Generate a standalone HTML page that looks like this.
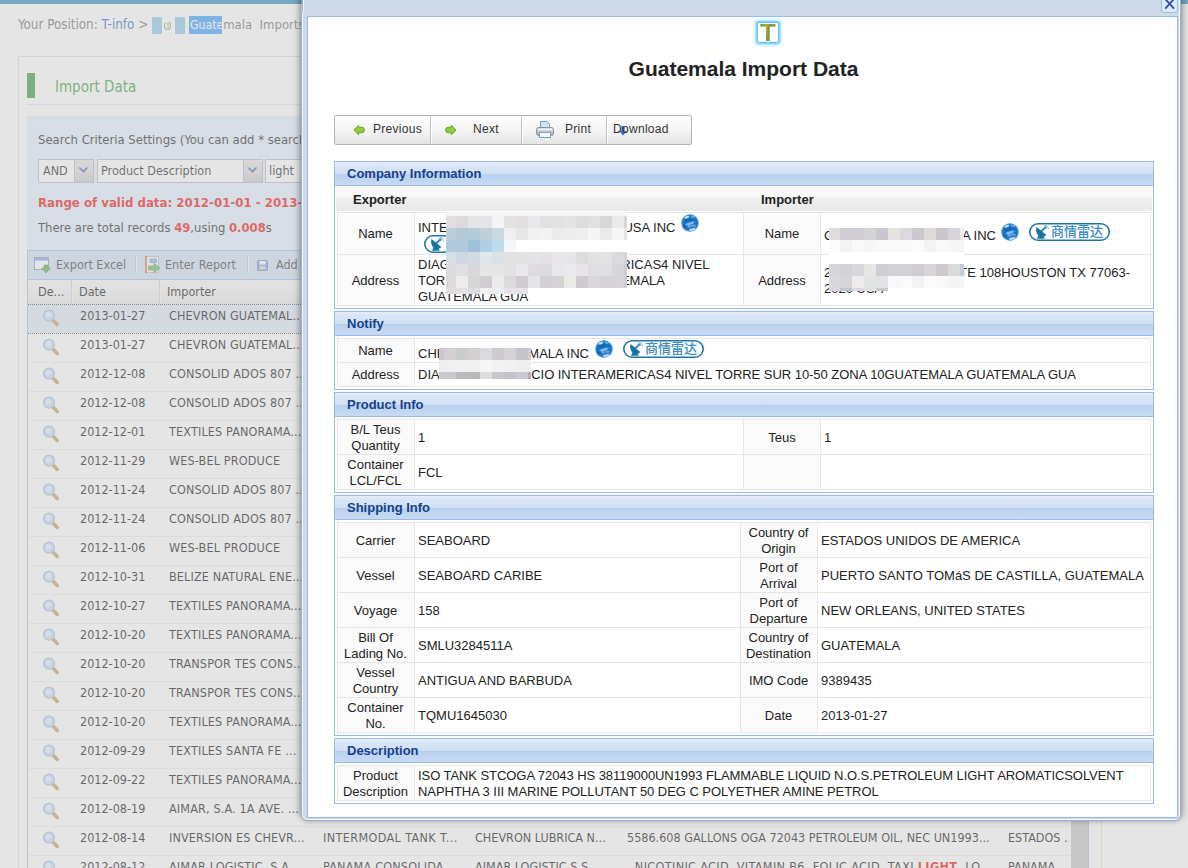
<!DOCTYPE html>
<html><head><meta charset="utf-8"><title>Guatemala Import Data</title>
<style>
html,body{margin:0;padding:0}
body{width:1188px;height:868px;overflow:hidden;position:relative;background:#fff;font-family:"Liberation Sans","Noto Sans CJK SC",sans-serif;font-size:13px;color:#222}
#bg{position:absolute;left:0;top:0;width:1188px;height:868px;overflow:hidden;font-family:"DejaVu Sans Condensed","DejaVu Sans","Liberation Sans",sans-serif;font-size:12.5px;color:#000}
#bg div,#bg span{position:absolute;white-space:pre}
#mask{position:absolute;left:0;top:0;width:1188px;height:868px;background:#ccc;opacity:.5}
.grow{left:28px;width:1041px;height:28px;border-top:1px solid #fff;border-bottom:0;overflow:hidden}
.grow:after{content:"";position:absolute;left:0;right:0;bottom:0;height:0}
.gline{left:28px;width:1041px;height:1px;background:#ededed}
.grow.sel{background:#dfe8f6;border-top:1px dotted #4a4a4a;height:28px}
.gt{top:3px;line-height:16px;height:16px}
.hl{color:#e00;font-weight:bold}
.mag{display:block}
#win i{position:absolute;display:block}
#win div,#win span{position:absolute}
.pnl{left:334px;width:818px;border:1px solid #99bbe8;background:#fff}
.ph{left:0;top:0;width:818px;height:23px;border-bottom:1px solid #99bbe8;background:linear-gradient(#e6eef9 0,#dbe7f6 12%,#cfdff4 51%,#b8cfee 53%,#c8dbf3 100%)}
.ph span{left:12px;top:4px;line-height:16px;font-weight:bold;font-size:13px;color:#15428b;white-space:pre}
.tb{border:1px solid #e6e6e6;background:#fff}
.lb{background:#fafafa}
.vl{width:1px;background:#e6e6e6}
.hl2{height:1px;background:#e6e6e6}
.lbl{width:120px;text-align:center;line-height:16px;white-space:pre;color:#222}
.val{line-height:16px;white-space:pre;color:#222}
.globe{position:absolute}
.radar{width:81px;height:18px}
.rt{left:22px;top:0.5px;font-size:13px;font-weight:500;line-height:16px;color:#3b8cbf;white-space:pre;font-family:"Liberation Sans","Noto Sans CJK SC",sans-serif}
.btn{top:115px;height:28px;border:1px solid #bbb;background:linear-gradient(#fff,#f4f4f4 50%,#e6e6e6);}
.btn span{top:6px;line-height:16px;font-size:12px;color:#333;white-space:pre}
</style></head><body>
<div id="bg">
<div style="left:0;top:0;width:1188px;height:4px;background:#1a84b2"></div>
<span style="left:18px;top:16px;line-height:18px;font-size:13.3px;color:#666">Your Position: <span style="position:static;color:#2a5db0">T-info</span> &gt;</span>
<div style="left:152px;top:17px;width:33px;height:17px;background:#fff"></div>
<div style="left:152px;top:17px;width:10px;height:17px;background:#86c6e6"></div>
<div style="left:175px;top:17px;width:10px;height:17px;background:#86c6e6"></div>
<div style="left:164px;top:21px;width:5px;height:7px;border:1.5px solid #6aa84f;border-top-color:transparent;border-radius:50%"></div><div style="left:167px;top:22px;width:2px;height:6px;background:#d9c9a0"></div>
<div style="left:189px;top:16px;width:33px;height:18px;background:#3399ff"></div>
<span style="left:190px;top:16px;line-height:18px;font-size:13px;color:#666"><span style="position:static;color:#fff;font-size:12.2px">Guate</span>mala  Imports</span>
<div style="left:18px;top:56px;width:1082px;height:900px;border:1px solid #dcdcdc"></div>
<div style="left:27px;top:73px;width:8px;height:25px;background:#2f972d"></div>
<span style="left:55px;top:77px;line-height:20px;font-size:15px;color:#2f972d">Import Data</span>
<div style="left:27px;top:104px;width:1064px;height:1px;background:#e4e4e4"></div>
<div style="left:27px;top:116px;width:1062px;height:800px;background:#e3eefc"></div>
<span style="left:38px;top:131px;line-height:18px;font-size:12.95px;color:#111">Search Criteria Settings (You can add * search with wildcards)</span>
<div style="left:38px;top:159px;width:54px;height:22px;border:1px solid #b0b4c6;background:#fff"></div>
<div style="left:74px;top:160px;width:18px;height:22px;background:linear-gradient(#e2e2e2,#d9d9d9 50%,#c6c6c6);border-left:1px solid #b0b4c6;border-radius:0 3px 0 0"></div>
<svg style="position:absolute;left:78px;top:167px" width="11" height="7" viewBox="0 0 11 7"><path d="M0.3 0.6 L2.6 0.4 L5.4 3.2 L8.2 0.4 L10.5 0.6 L5.4 6 Z" fill="#3f64ae"/></svg>
<span style="left:43px;top:162px;line-height:18px;color:#111">AND</span>
<div style="left:97px;top:159px;width:164px;height:22px;border:1px solid #b0b4c6;background:#fff"></div>
<div style="left:243px;top:160px;width:18px;height:22px;background:linear-gradient(#e2e2e2,#d9d9d9 50%,#c6c6c6);border-left:1px solid #b0b4c6;border-radius:0 3px 0 0"></div>
<svg style="position:absolute;left:247px;top:167px" width="11" height="7" viewBox="0 0 11 7"><path d="M0.3 0.6 L2.6 0.4 L5.4 3.2 L8.2 0.4 L10.5 0.6 L5.4 6 Z" fill="#3f64ae"/></svg>
<span style="left:101px;top:162px;line-height:18px;color:#111">Product Description</span>
<div style="left:265px;top:159px;width:160px;height:22px;border:1px solid #b0b4c6;background:#fff"></div>
<span style="left:269px;top:162px;line-height:18px;color:#111">light</span>
<span style="left:38px;top:194px;line-height:18px;font-size:13.1px;color:#e00;font-weight:bold">Range of valid data<span style="position:static">:</span> 2012-01-01 - 2013-01-31</span>
<span style="left:38px;top:219px;line-height:18px;font-size:12.9px;color:#111">There are total records <b style="color:#e00">49</b>,using <b style="color:#e00">0.008</b>s</span>
<div style="left:27px;top:250px;width:1060px;height:700px;border:1px solid #99bbe8;background:#fff"></div>
<div style="left:28px;top:251px;width:1060px;height:28px;background:#d0def0;border-bottom:1px solid #99bbe8"></div>
<svg style="position:absolute;left:34px;top:257px" width="17" height="17" viewBox="0 0 17 17"><rect x="0.5" y="0.5" width="14" height="12" fill="#fff" stroke="#7d96c0"/><rect x="1" y="1" width="13" height="2.6" fill="#7aa0e6"/><path d="M10 8h4v3h2.5l-4.5 5-4.5-5H10z" fill="#4cae3c" stroke="#2f8a25" stroke-width=".6"/></svg>
<span style="left:56px;top:256px;line-height:18px;color:#333">Export Excel</span>
<div style="left:135px;top:257px;width:1px;height:16px;background:#98c8ff"></div><div style="left:136px;top:257px;width:1px;height:16px;background:#fff"></div>
<svg style="position:absolute;left:144px;top:256px" width="17" height="18" viewBox="0 0 17 18"><rect x="2.5" y="0.5" width="12" height="16" fill="#f6f6f6" stroke="#b8bcc6"/><rect x="1" y="0" width="2" height="17" fill="#c86a3c"/><path d="M1 2h2M1 4h2M1 6h2M1 8h2M1 10h2M1 12h2M1 14h2" stroke="#f0c0a0" stroke-width=".6"/><rect x="6" y="3" width="6.5" height="3.6" fill="#86aef0" stroke="#5b86d6" stroke-width=".6"/><path d="M4.6 10h5.4V7.2l6 4.8-6 4.8V14H4.6z" fill="#62bc50" stroke="#2f8a25" stroke-width=".6"/></svg>
<span style="left:165px;top:256px;line-height:18px;color:#333">Enter Report</span>
<div style="left:247px;top:257px;width:1px;height:16px;background:#98c8ff"></div><div style="left:248px;top:257px;width:1px;height:16px;background:#fff"></div>
<svg style="position:absolute;left:257px;top:260px" width="12" height="11" viewBox="0 0 12 11"><rect x="0.5" y="0.5" width="10" height="10" rx="1" fill="#7d9be0" stroke="#5f7fd0"/><rect x="2.5" y="1" width="6" height="3.5" fill="#fff"/><rect x="2.5" y="6.3" width="6" height="3.2" fill="#cfe6a0"/></svg>
<span style="left:276px;top:256px;line-height:18px;color:#333">Add</span>
<div style="left:28px;top:280px;width:1060px;height:24px;background:linear-gradient(#f9f9f9,#f3f3f3 50%,#e4e4e4);"></div>
<div style="left:71px;top:280px;width:1px;height:23px;background:#d0d0d0"></div><div style="left:72px;top:280px;width:1px;height:23px;background:#fafafa"></div>
<div style="left:159px;top:280px;width:1px;height:23px;background:#d0d0d0"></div><div style="left:160px;top:280px;width:1px;height:23px;background:#fafafa"></div>
<span style="left:38px;top:283px;line-height:18px">De...</span>
<span style="left:79px;top:283px;line-height:18px">Date</span>
<span style="left:167px;top:283px;line-height:18px">Importer</span>
<div class="grow sel" style="top:304px"><div class="gc" style="left:14px;top:4px"><svg class="mag" width="18" height="18" viewBox="0 0 18 18"><line x1="10.4" y1="10.4" x2="15.2" y2="15.4" stroke="#c9975a" stroke-width="3.6" stroke-linecap="round"/><circle cx="7" cy="6.6" r="5.4" fill="#c6dcf5" stroke="#9fbfe8" stroke-width="1.5"/><circle cx="6.4" cy="5.8" r="2.6" fill="#e6f1fc"/></svg></div><span class="gt" style="left:52px">2013-01-27</span><span class="gt" style="left:141px;letter-spacing:.15px">CHEVRON GUATEMAL...</span></div>
<div class="grow" style="top:333px"><div class="gc" style="left:14px;top:4px"><svg class="mag" width="18" height="18" viewBox="0 0 18 18"><line x1="10.4" y1="10.4" x2="15.2" y2="15.4" stroke="#c9975a" stroke-width="3.6" stroke-linecap="round"/><circle cx="7" cy="6.6" r="5.4" fill="#c6dcf5" stroke="#9fbfe8" stroke-width="1.5"/><circle cx="6.4" cy="5.8" r="2.6" fill="#e6f1fc"/></svg></div><span class="gt" style="left:52px">2013-01-27</span><span class="gt" style="left:141px;letter-spacing:.15px">CHEVRON GUATEMAL...</span></div>
<div class="grow" style="top:362px"><div class="gc" style="left:14px;top:4px"><svg class="mag" width="18" height="18" viewBox="0 0 18 18"><line x1="10.4" y1="10.4" x2="15.2" y2="15.4" stroke="#c9975a" stroke-width="3.6" stroke-linecap="round"/><circle cx="7" cy="6.6" r="5.4" fill="#c6dcf5" stroke="#9fbfe8" stroke-width="1.5"/><circle cx="6.4" cy="5.8" r="2.6" fill="#e6f1fc"/></svg></div><span class="gt" style="left:52px">2012-12-08</span><span class="gt" style="left:141px;letter-spacing:.15px">CONSOLID ADOS 807 ...</span></div>
<div class="grow" style="top:391px"><div class="gc" style="left:14px;top:4px"><svg class="mag" width="18" height="18" viewBox="0 0 18 18"><line x1="10.4" y1="10.4" x2="15.2" y2="15.4" stroke="#c9975a" stroke-width="3.6" stroke-linecap="round"/><circle cx="7" cy="6.6" r="5.4" fill="#c6dcf5" stroke="#9fbfe8" stroke-width="1.5"/><circle cx="6.4" cy="5.8" r="2.6" fill="#e6f1fc"/></svg></div><span class="gt" style="left:52px">2012-12-08</span><span class="gt" style="left:141px;letter-spacing:.15px">CONSOLID ADOS 807 ...</span></div>
<div class="grow" style="top:420px"><div class="gc" style="left:14px;top:4px"><svg class="mag" width="18" height="18" viewBox="0 0 18 18"><line x1="10.4" y1="10.4" x2="15.2" y2="15.4" stroke="#c9975a" stroke-width="3.6" stroke-linecap="round"/><circle cx="7" cy="6.6" r="5.4" fill="#c6dcf5" stroke="#9fbfe8" stroke-width="1.5"/><circle cx="6.4" cy="5.8" r="2.6" fill="#e6f1fc"/></svg></div><span class="gt" style="left:52px">2012-12-01</span><span class="gt" style="left:141px;letter-spacing:.15px">TEXTILES PANORAMA...</span></div>
<div class="grow" style="top:449px"><div class="gc" style="left:14px;top:4px"><svg class="mag" width="18" height="18" viewBox="0 0 18 18"><line x1="10.4" y1="10.4" x2="15.2" y2="15.4" stroke="#c9975a" stroke-width="3.6" stroke-linecap="round"/><circle cx="7" cy="6.6" r="5.4" fill="#c6dcf5" stroke="#9fbfe8" stroke-width="1.5"/><circle cx="6.4" cy="5.8" r="2.6" fill="#e6f1fc"/></svg></div><span class="gt" style="left:52px">2012-11-29</span><span class="gt" style="left:141px;letter-spacing:.15px">WES-BEL PRODUCE</span></div>
<div class="grow" style="top:478px"><div class="gc" style="left:14px;top:4px"><svg class="mag" width="18" height="18" viewBox="0 0 18 18"><line x1="10.4" y1="10.4" x2="15.2" y2="15.4" stroke="#c9975a" stroke-width="3.6" stroke-linecap="round"/><circle cx="7" cy="6.6" r="5.4" fill="#c6dcf5" stroke="#9fbfe8" stroke-width="1.5"/><circle cx="6.4" cy="5.8" r="2.6" fill="#e6f1fc"/></svg></div><span class="gt" style="left:52px">2012-11-24</span><span class="gt" style="left:141px;letter-spacing:.15px">CONSOLID ADOS 807 ...</span></div>
<div class="grow" style="top:507px"><div class="gc" style="left:14px;top:4px"><svg class="mag" width="18" height="18" viewBox="0 0 18 18"><line x1="10.4" y1="10.4" x2="15.2" y2="15.4" stroke="#c9975a" stroke-width="3.6" stroke-linecap="round"/><circle cx="7" cy="6.6" r="5.4" fill="#c6dcf5" stroke="#9fbfe8" stroke-width="1.5"/><circle cx="6.4" cy="5.8" r="2.6" fill="#e6f1fc"/></svg></div><span class="gt" style="left:52px">2012-11-24</span><span class="gt" style="left:141px;letter-spacing:.15px">CONSOLID ADOS 807 ...</span></div>
<div class="grow" style="top:536px"><div class="gc" style="left:14px;top:4px"><svg class="mag" width="18" height="18" viewBox="0 0 18 18"><line x1="10.4" y1="10.4" x2="15.2" y2="15.4" stroke="#c9975a" stroke-width="3.6" stroke-linecap="round"/><circle cx="7" cy="6.6" r="5.4" fill="#c6dcf5" stroke="#9fbfe8" stroke-width="1.5"/><circle cx="6.4" cy="5.8" r="2.6" fill="#e6f1fc"/></svg></div><span class="gt" style="left:52px">2012-11-06</span><span class="gt" style="left:141px;letter-spacing:.15px">WES-BEL PRODUCE</span></div>
<div class="grow" style="top:565px"><div class="gc" style="left:14px;top:4px"><svg class="mag" width="18" height="18" viewBox="0 0 18 18"><line x1="10.4" y1="10.4" x2="15.2" y2="15.4" stroke="#c9975a" stroke-width="3.6" stroke-linecap="round"/><circle cx="7" cy="6.6" r="5.4" fill="#c6dcf5" stroke="#9fbfe8" stroke-width="1.5"/><circle cx="6.4" cy="5.8" r="2.6" fill="#e6f1fc"/></svg></div><span class="gt" style="left:52px">2012-10-31</span><span class="gt" style="left:141px;letter-spacing:.15px">BELIZE NATURAL ENE...</span></div>
<div class="grow" style="top:594px"><div class="gc" style="left:14px;top:4px"><svg class="mag" width="18" height="18" viewBox="0 0 18 18"><line x1="10.4" y1="10.4" x2="15.2" y2="15.4" stroke="#c9975a" stroke-width="3.6" stroke-linecap="round"/><circle cx="7" cy="6.6" r="5.4" fill="#c6dcf5" stroke="#9fbfe8" stroke-width="1.5"/><circle cx="6.4" cy="5.8" r="2.6" fill="#e6f1fc"/></svg></div><span class="gt" style="left:52px">2012-10-27</span><span class="gt" style="left:141px;letter-spacing:.15px">TEXTILES PANORAMA...</span></div>
<div class="grow" style="top:623px"><div class="gc" style="left:14px;top:4px"><svg class="mag" width="18" height="18" viewBox="0 0 18 18"><line x1="10.4" y1="10.4" x2="15.2" y2="15.4" stroke="#c9975a" stroke-width="3.6" stroke-linecap="round"/><circle cx="7" cy="6.6" r="5.4" fill="#c6dcf5" stroke="#9fbfe8" stroke-width="1.5"/><circle cx="6.4" cy="5.8" r="2.6" fill="#e6f1fc"/></svg></div><span class="gt" style="left:52px">2012-10-20</span><span class="gt" style="left:141px;letter-spacing:.15px">TEXTILES PANORAMA...</span></div>
<div class="grow" style="top:652px"><div class="gc" style="left:14px;top:4px"><svg class="mag" width="18" height="18" viewBox="0 0 18 18"><line x1="10.4" y1="10.4" x2="15.2" y2="15.4" stroke="#c9975a" stroke-width="3.6" stroke-linecap="round"/><circle cx="7" cy="6.6" r="5.4" fill="#c6dcf5" stroke="#9fbfe8" stroke-width="1.5"/><circle cx="6.4" cy="5.8" r="2.6" fill="#e6f1fc"/></svg></div><span class="gt" style="left:52px">2012-10-20</span><span class="gt" style="left:141px;letter-spacing:.15px">TRANSPOR TES CONS...</span></div>
<div class="grow" style="top:681px"><div class="gc" style="left:14px;top:4px"><svg class="mag" width="18" height="18" viewBox="0 0 18 18"><line x1="10.4" y1="10.4" x2="15.2" y2="15.4" stroke="#c9975a" stroke-width="3.6" stroke-linecap="round"/><circle cx="7" cy="6.6" r="5.4" fill="#c6dcf5" stroke="#9fbfe8" stroke-width="1.5"/><circle cx="6.4" cy="5.8" r="2.6" fill="#e6f1fc"/></svg></div><span class="gt" style="left:52px">2012-10-20</span><span class="gt" style="left:141px;letter-spacing:.15px">TRANSPOR TES CONS...</span></div>
<div class="grow" style="top:710px"><div class="gc" style="left:14px;top:4px"><svg class="mag" width="18" height="18" viewBox="0 0 18 18"><line x1="10.4" y1="10.4" x2="15.2" y2="15.4" stroke="#c9975a" stroke-width="3.6" stroke-linecap="round"/><circle cx="7" cy="6.6" r="5.4" fill="#c6dcf5" stroke="#9fbfe8" stroke-width="1.5"/><circle cx="6.4" cy="5.8" r="2.6" fill="#e6f1fc"/></svg></div><span class="gt" style="left:52px">2012-10-20</span><span class="gt" style="left:141px;letter-spacing:.15px">TEXTILES PANORAMA...</span></div>
<div class="grow" style="top:739px"><div class="gc" style="left:14px;top:4px"><svg class="mag" width="18" height="18" viewBox="0 0 18 18"><line x1="10.4" y1="10.4" x2="15.2" y2="15.4" stroke="#c9975a" stroke-width="3.6" stroke-linecap="round"/><circle cx="7" cy="6.6" r="5.4" fill="#c6dcf5" stroke="#9fbfe8" stroke-width="1.5"/><circle cx="6.4" cy="5.8" r="2.6" fill="#e6f1fc"/></svg></div><span class="gt" style="left:52px">2012-09-29</span><span class="gt" style="left:141px;letter-spacing:.15px">TEXTILES SANTA FE ...</span></div>
<div class="grow" style="top:768px"><div class="gc" style="left:14px;top:4px"><svg class="mag" width="18" height="18" viewBox="0 0 18 18"><line x1="10.4" y1="10.4" x2="15.2" y2="15.4" stroke="#c9975a" stroke-width="3.6" stroke-linecap="round"/><circle cx="7" cy="6.6" r="5.4" fill="#c6dcf5" stroke="#9fbfe8" stroke-width="1.5"/><circle cx="6.4" cy="5.8" r="2.6" fill="#e6f1fc"/></svg></div><span class="gt" style="left:52px">2012-09-22</span><span class="gt" style="left:141px;letter-spacing:.15px">TEXTILES PANORAMA...</span></div>
<div class="grow" style="top:797px"><div class="gc" style="left:14px;top:4px"><svg class="mag" width="18" height="18" viewBox="0 0 18 18"><line x1="10.4" y1="10.4" x2="15.2" y2="15.4" stroke="#c9975a" stroke-width="3.6" stroke-linecap="round"/><circle cx="7" cy="6.6" r="5.4" fill="#c6dcf5" stroke="#9fbfe8" stroke-width="1.5"/><circle cx="6.4" cy="5.8" r="2.6" fill="#e6f1fc"/></svg></div><span class="gt" style="left:52px">2012-08-19</span><span class="gt" style="left:141px;letter-spacing:.15px">AIMAR, S.A. 1A AVE. ...</span></div>
<div class="grow" style="top:826px"><div class="gc" style="left:14px;top:4px"><svg class="mag" width="18" height="18" viewBox="0 0 18 18"><line x1="10.4" y1="10.4" x2="15.2" y2="15.4" stroke="#c9975a" stroke-width="3.6" stroke-linecap="round"/><circle cx="7" cy="6.6" r="5.4" fill="#c6dcf5" stroke="#9fbfe8" stroke-width="1.5"/><circle cx="6.4" cy="5.8" r="2.6" fill="#e6f1fc"/></svg></div><span class="gt" style="left:52px">2012-08-14</span><span class="gt" style="left:141px;letter-spacing:.15px">INVERSION ES CHEVR...</span><span class="gt" style="left:295px;letter-spacing:0.38px">INTERMODAL TANK T...</span><span class="gt" style="left:447px">CHEVRON LUBRICA N...</span><span class="gt" style="left:599px">5586.608 GALLONS OGA 72043 PETROLEUM OIL, NEC UN1993...</span><span class="gt" style="left:980px">ESTADOS ...</span></div>
<div class="grow" style="top:855px"><div class="gc" style="left:14px;top:4px"><svg class="mag" width="18" height="18" viewBox="0 0 18 18"><line x1="10.4" y1="10.4" x2="15.2" y2="15.4" stroke="#c9975a" stroke-width="3.6" stroke-linecap="round"/><circle cx="7" cy="6.6" r="5.4" fill="#c6dcf5" stroke="#9fbfe8" stroke-width="1.5"/><circle cx="6.4" cy="5.8" r="2.6" fill="#e6f1fc"/></svg></div><span class="gt" style="left:52px">2012-08-12</span><span class="gt" style="left:141px;letter-spacing:.15px">AIMAR LOGISTIC, S.A...</span><span class="gt" style="left:295px;letter-spacing:0.2px">PANAMA CONSOLIDA...</span><span class="gt" style="left:447px">AIMAR LOGISTIC S.S...</span><span class="gt" style="left:599px;letter-spacing:0.36px">&nbsp; NICOTINIC ACID, VITAMIN B6, FOLIC ACID, TAXI <b class="hl">LIGHT</b>, LO...</span><span class="gt" style="left:980px">PANAMA ...</span></div>
<div class="gline" style="top:362px"></div><div class="gline" style="top:391px"></div><div class="gline" style="top:420px"></div><div class="gline" style="top:449px"></div><div class="gline" style="top:478px"></div><div class="gline" style="top:507px"></div><div class="gline" style="top:536px"></div><div class="gline" style="top:565px"></div><div class="gline" style="top:594px"></div><div class="gline" style="top:623px"></div><div class="gline" style="top:652px"></div><div class="gline" style="top:681px"></div><div class="gline" style="top:710px"></div><div class="gline" style="top:739px"></div><div class="gline" style="top:768px"></div><div class="gline" style="top:797px"></div><div class="gline" style="top:826px"></div><div class="gline" style="top:855px"></div>
<div class="gline" style="top:333px;background:none;border-top:1px dotted #4a4a4a;height:0"></div>
<div style="left:1071px;top:280px;width:17px;height:600px;background:#c3c3c3"></div>
</div>
<div id="mask"></div>
<div id="win">
<div style="left:301px;top:-20px;width:878px;height:839px;border:1px solid #9fb2cb;border-radius:6px;background:#ced9e7;box-shadow:-4px -2px 6px -2px rgba(0,0,0,.3),4px -2px 6px -2px rgba(0,0,0,.3),0 2px 4px 0 rgba(0,0,0,.12), inset 0 0 0 1px #f2f6fb"></div>
<div style="left:307px;top:16px;width:869px;height:800px;border:1px solid #99bbe8;background:#fff"></div>
<div style="left:301px;top:0;width:1px;height:12px;background:#c9c9c9"></div><div style="left:302px;top:0;width:1px;height:12px;background:#9fb2cb"></div><div style="left:303px;top:0;width:1px;height:12px;background:#f2f6fb"></div><div style="left:301px;top:0;width:1px;height:4px;background:#6f9fb6"></div>
<div style="left:1161px;top:-6px;width:15px;height:17px;border:1px solid #9bbbe6;border-radius:3px;background:#dbe9fb"></div>
<svg style="position:absolute;left:1163px;top:0" width="14" height="11" viewBox="0 0 14 11"><path d="M2.2 -1 L11 8.6 M11 -1 L2.2 8.6" stroke="#3c519c" stroke-width="1.9"/></svg>
<div style="left:758px;top:23px;width:20px;height:19px;background:#fff;box-shadow:0 0 0 1.5px #62c6f7,0 0 3px 3px rgba(92,196,247,.6);border-radius:1px"></div>
<span style="left:756px;top:20px;width:24px;height:26px;text-align:center;line-height:26px;font-size:23.5px;font-weight:bold;transform:scaleX(1.1);font-family:'Liberation Sans',sans-serif;color:#8a9a4c;background:linear-gradient(100deg,#8a5fb0 0,#6fae3a 22%,#b9a733 42%,#7d8f55 52%,#8aa83c 62%,#a9725a 80%,#5fae4a 100%);-webkit-background-clip:text;background-clip:text;-webkit-text-fill-color:transparent">T</span>
<span style="left:443px;top:55px;width:601px;text-align:center;font-size:21px;font-weight:bold;line-height:28px;color:#222;white-space:pre">Guatemala Import Data</span>
<div style="left:334px;top:115px;width:356px;height:28px;border:1px solid #b4b4b4;border-radius:2px;background:linear-gradient(#fefefe,#f3f3f3 55%,#e4e4e4)"></div>
<div style="left:430px;top:116px;width:1px;height:28px;background:#c2c2c2"></div><div style="left:431px;top:116px;width:1px;height:28px;background:rgba(255,255,255,.8)"></div>
<div style="left:521px;top:116px;width:1px;height:28px;background:#c2c2c2"></div><div style="left:522px;top:116px;width:1px;height:28px;background:rgba(255,255,255,.8)"></div>
<div style="left:606px;top:116px;width:1px;height:28px;background:#c2c2c2"></div><div style="left:607px;top:116px;width:1px;height:28px;background:rgba(255,255,255,.8)"></div>
<svg style="position:absolute;left:353px;top:124px" width="12" height="12" viewBox="0 0 12 12"><path d="M5.6 1.2 L5.6 3.3 L9 3.3 A2.3 2.6 0 0 1 9 8.7 L5.6 8.7 L5.6 10.8 L0.9 6 Z" fill="#8fca3c" stroke="#6aa61f" stroke-width="1" stroke-linejoin="round"/></svg>
<span style="left:373px;top:121px;font-size:12px;letter-spacing:.3px;line-height:16px;color:#333;white-space:pre">Previous</span>
<svg style="position:absolute;left:444.5px;top:124px" width="12" height="12" viewBox="0 0 12 12"><path d="M6.4 1.2 L6.4 3.3 L3 3.3 A2.3 2.6 0 0 0 3 8.7 L6.4 8.7 L6.4 10.8 L11.1 6 Z" fill="#8fca3c" stroke="#6aa61f" stroke-width="1" stroke-linejoin="round"/></svg>
<span style="left:473px;top:121px;font-size:12px;letter-spacing:.3px;line-height:16px;color:#333;white-space:pre">Next</span>
<svg style="position:absolute;left:536px;top:121px" width="18" height="17" viewBox="0 0 18 17"><defs><linearGradient id="pg" x1="0" y1="0" x2="0" y2="1"><stop offset="0" stop-color="#e9e9e9"/><stop offset="1" stop-color="#a9a9a9"/></linearGradient></defs><path d="M4.5 0.5h6.5l2.5 2.5v5h-9z" fill="#cfe4fb" stroke="#6aa3e4"/><rect x="0.5" y="6.5" width="17" height="8" rx="2.2" fill="url(#pg)" stroke="#909090"/><rect x="2" y="8" width="14" height="1.2" fill="#f6f6f6" opacity=".8"/><rect x="3.5" y="11.5" width="11" height="5" fill="#fff" stroke="#6aa3e4"/></svg>
<span style="left:565px;top:121px;font-size:12px;letter-spacing:.3px;line-height:16px;color:#333;white-space:pre">Print</span>
<svg style="position:absolute;left:619px;top:126px" width="8" height="10" viewBox="0 0 8 10"><path d="M2.4 0h3.2v5h2.2L4 9.6 0.2 5h2.2z" fill="#3a6fd8"/></svg>
<span style="left:613px;top:121px;font-size:12px;letter-spacing:.3px;line-height:16px;color:#333;white-space:pre">Download</span>

<div class="pnl" style="top:161px;height:146px"><div class="ph"><span>Company Information</span></div></div><div style="left:336px;top:186px;width:816px;height:25px;background:linear-gradient(#fbfbfb 0,#f7f7f7 42%,#f0f0f0 45%,#e8e8e8 100%)"></div><span style="left:353px;top:192px;line-height:16px;font-weight:bold;color:#222;white-space:pre">Exporter</span><span style="left:761px;top:192px;line-height:16px;font-weight:bold;color:#222;white-space:pre">Importer</span><div class="tb" style="left:337px;top:212px;width:812px;height:92px"></div><div class="lb" style="left:338px;top:213px;width:76px;height:92px"></div><div class="lb" style="left:744px;top:213px;width:76px;height:92px"></div><div class="vl" style="left:414px;top:212px;height:94px"></div><div class="vl" style="left:743px;top:212px;height:94px"></div><div class="vl" style="left:820px;top:212px;height:94px"></div><div class="hl2" style="left:337px;top:254px;width:814px"></div><span class="lbl" style="left:315.5px;top:226px">Name</span><span class="lbl" style="left:315.5px;top:273px">Address</span><span class="lbl" style="left:722px;top:226px">Name</span><span class="lbl" style="left:722px;top:273px">Address</span><span class="val" style="left:418px;top:220px;">INTE</span><span class="val" style="right:512.5px;top:220px;">USA INC</span><span style="left:681px;top:214px;width:18px;height:18px"><svg class="globe" width="18" height="18" viewBox="0 0 18 18"><defs><radialGradient id="gg" cx="50%" cy="50%" r="50%"><stop offset="0" stop-color="#1672c4"/><stop offset="0.75" stop-color="#1a74c6"/><stop offset="0.93" stop-color="#4a98dc"/><stop offset="1" stop-color="#8fc3ee" stop-opacity=".7"/></radialGradient><filter id="gb" x="-20%" y="-20%" width="140%" height="140%"><feGaussianBlur stdDeviation="0.7"/></filter><clipPath id="gc"><circle cx="9" cy="9" r="8.8"/></clipPath></defs><circle cx="9" cy="9" r="9" fill="url(#gg)"/><g clip-path="url(#gc)" filter="url(#gb)"><ellipse cx="5.8" cy="3.2" rx="2.4" ry="1.1" fill="#fff" opacity=".8" transform="rotate(-18 5.8 3.2)"/><ellipse cx="12" cy="2.8" rx="2.6" ry="1" fill="#9fcdf0" opacity=".6"/><ellipse cx="9.5" cy="9.4" rx="6.5" ry="1.3" fill="#b8d8f4" opacity=".7" transform="rotate(-16 9.5 9.4)"/><ellipse cx="8.2" cy="12.2" rx="1.8" ry="1.5" fill="#a8c8f0" opacity=".6"/><ellipse cx="12.5" cy="11.8" rx="2.4" ry="1.2" fill="#a8c8f0" opacity=".55"/><ellipse cx="11.2" cy="15.4" rx="3.4" ry="1.3" fill="#e8f3fc" opacity=".75" transform="rotate(-12 11.2 15.4)"/><ellipse cx="5.4" cy="6.6" rx="1.6" ry="1.2" fill="#0a5fb4" opacity=".7"/><ellipse cx="9" cy="5.8" rx="1.7" ry="1.3" fill="#0a5fb4" opacity=".7"/><ellipse cx="3.8" cy="12" rx="2" ry="2.6" fill="#0a60b6" opacity=".6"/><ellipse cx="14.2" cy="8" rx="2" ry="2.2" fill="#0a60b6" opacity=".55"/></g></svg></span><span class="radar" style="left:424px;top:235px"><svg width="81" height="18" viewBox="0 0 81 18" style="position:absolute;left:0;top:0"><rect x="0.8" y="0.8" width="79.4" height="16.4" rx="8.2" fill="#fff" stroke="#1f77a6" stroke-width="1.6"/><g transform="translate(6.2,1.9) scale(0.9)"><path d="M1.6 2.2 L12.4 11.2 C10 14.2 5 13.8 2.6 10.6 C0.8 8.2 0.6 4.6 1.6 2.2 Z" fill="#1876a4"/><path d="M3.6 11.4 L2 15.4 L10.6 15.4 L9 12.4 Z" fill="#1876a4"/><path d="M6 7.8 L10.6 3.6" stroke="#1876a4" stroke-width="1.8"/><circle cx="11.2" cy="3.1" r="1.6" fill="#4f97be"/><path d="M10 0.5 C13.2 0.1 15.1 2.3 14.5 5.3" fill="none" stroke="#9cc6dc" stroke-width="1.2"/></g></svg><span class="rt">商情雷达</span></span><span class="val" style="left:418px;top:257px;">DIAG</span><span class="val" style="right:478.5px;top:257px;">RICAS4 NIVEL</span><span class="val" style="left:418px;top:273px;">TORRE</span><span class="val" style="right:523px;top:273px;">EMALA</span><span class="val" style="left:418px;top:289px;">GUATEMALA GUA</span><span class="val" style="left:824px;top:228px;">C</span><span class="val" style="right:192px;top:228px;">A INC</span><span style="left:1001px;top:223px;width:18px;height:18px"><svg class="globe" width="18" height="18" viewBox="0 0 18 18"><defs><radialGradient id="gg" cx="50%" cy="50%" r="50%"><stop offset="0" stop-color="#1672c4"/><stop offset="0.75" stop-color="#1a74c6"/><stop offset="0.93" stop-color="#4a98dc"/><stop offset="1" stop-color="#8fc3ee" stop-opacity=".7"/></radialGradient><filter id="gb" x="-20%" y="-20%" width="140%" height="140%"><feGaussianBlur stdDeviation="0.7"/></filter><clipPath id="gc"><circle cx="9" cy="9" r="8.8"/></clipPath></defs><circle cx="9" cy="9" r="9" fill="url(#gg)"/><g clip-path="url(#gc)" filter="url(#gb)"><ellipse cx="5.8" cy="3.2" rx="2.4" ry="1.1" fill="#fff" opacity=".8" transform="rotate(-18 5.8 3.2)"/><ellipse cx="12" cy="2.8" rx="2.6" ry="1" fill="#9fcdf0" opacity=".6"/><ellipse cx="9.5" cy="9.4" rx="6.5" ry="1.3" fill="#b8d8f4" opacity=".7" transform="rotate(-16 9.5 9.4)"/><ellipse cx="8.2" cy="12.2" rx="1.8" ry="1.5" fill="#a8c8f0" opacity=".6"/><ellipse cx="12.5" cy="11.8" rx="2.4" ry="1.2" fill="#a8c8f0" opacity=".55"/><ellipse cx="11.2" cy="15.4" rx="3.4" ry="1.3" fill="#e8f3fc" opacity=".75" transform="rotate(-12 11.2 15.4)"/><ellipse cx="5.4" cy="6.6" rx="1.6" ry="1.2" fill="#0a5fb4" opacity=".7"/><ellipse cx="9" cy="5.8" rx="1.7" ry="1.3" fill="#0a5fb4" opacity=".7"/><ellipse cx="3.8" cy="12" rx="2" ry="2.6" fill="#0a60b6" opacity=".6"/><ellipse cx="14.2" cy="8" rx="2" ry="2.2" fill="#0a60b6" opacity=".55"/></g></svg></span><span class="radar" style="left:1029px;top:223px"><svg width="81" height="18" viewBox="0 0 81 18" style="position:absolute;left:0;top:0"><rect x="0.8" y="0.8" width="79.4" height="16.4" rx="8.2" fill="#fff" stroke="#1f77a6" stroke-width="1.6"/><g transform="translate(6.2,1.9) scale(0.9)"><path d="M1.6 2.2 L12.4 11.2 C10 14.2 5 13.8 2.6 10.6 C0.8 8.2 0.6 4.6 1.6 2.2 Z" fill="#1876a4"/><path d="M3.6 11.4 L2 15.4 L10.6 15.4 L9 12.4 Z" fill="#1876a4"/><path d="M6 7.8 L10.6 3.6" stroke="#1876a4" stroke-width="1.8"/><circle cx="11.2" cy="3.1" r="1.6" fill="#4f97be"/><path d="M10 0.5 C13.2 0.1 15.1 2.3 14.5 5.3" fill="none" stroke="#9cc6dc" stroke-width="1.2"/></g></svg><span class="rt">商情雷达</span></span><span class="val" style="left:824px;top:265px;">2</span><span class="val" style="right:58px;top:265px;">TE 108HOUSTON TX 77063-</span><span class="val" style="left:824px;top:281px;">2020 USA</span><i style="left:446px;top:212px;width:10px;height:4px;background:#f5f4f5"></i><i style="left:456px;top:212px;width:12px;height:4px;background:#f5f4f5"></i><i style="left:468px;top:212px;width:12px;height:4px;background:#f5f4f5"></i><i style="left:480px;top:212px;width:12px;height:4px;background:#f5f4f5"></i><i style="left:492px;top:212px;width:12px;height:4px;background:#f5f4f5"></i><i style="left:504px;top:212px;width:12px;height:4px;background:#f5f4f5"></i><i style="left:516px;top:212px;width:12px;height:4px;background:#f5f4f5"></i><i style="left:528px;top:212px;width:12px;height:4px;background:#f5f4f5"></i><i style="left:540px;top:212px;width:12px;height:4px;background:#f5f4f5"></i><i style="left:552px;top:212px;width:12px;height:4px;background:#f5f4f5"></i><i style="left:564px;top:212px;width:12px;height:4px;background:#f5f4f5"></i><i style="left:576px;top:212px;width:12px;height:4px;background:#f5f4f5"></i><i style="left:588px;top:212px;width:12px;height:4px;background:#f5f4f5"></i><i style="left:600px;top:212px;width:12px;height:4px;background:#f5f4f5"></i><i style="left:612px;top:212px;width:12px;height:4px;background:#f5f4f5"></i><i style="left:624px;top:212px;width:3px;height:4px;background:#f5f4f5"></i><i style="left:446px;top:216px;width:10px;height:12px;background:#e3dedd"></i><i style="left:456px;top:216px;width:12px;height:12px;background:#dcd9db"></i><i style="left:468px;top:216px;width:12px;height:12px;background:#e5e4e6"></i><i style="left:480px;top:216px;width:12px;height:12px;background:#e5e4e6"></i><i style="left:492px;top:216px;width:12px;height:12px;background:#f5f5f8"></i><i style="left:504px;top:216px;width:12px;height:12px;background:#e4e1e3"></i><i style="left:516px;top:216px;width:12px;height:12px;background:#e1dfe1"></i><i style="left:528px;top:216px;width:12px;height:12px;background:#e8e8ea"></i><i style="left:540px;top:216px;width:12px;height:12px;background:#e2e0e2"></i><i style="left:552px;top:216px;width:12px;height:12px;background:#e3e2e3"></i><i style="left:564px;top:216px;width:12px;height:12px;background:#e5e4e5"></i><i style="left:576px;top:216px;width:12px;height:12px;background:#dfdcde"></i><i style="left:588px;top:216px;width:12px;height:12px;background:#e0e1e1"></i><i style="left:600px;top:216px;width:12px;height:12px;background:#d9d6d9"></i><i style="left:612px;top:216px;width:12px;height:12px;background:#ebeaeb"></i><i style="left:624px;top:216px;width:3px;height:12px;background:#d9d6d9"></i><i style="left:446px;top:228px;width:10px;height:12px;background:#b9cfdb"></i><i style="left:456px;top:228px;width:12px;height:12px;background:#b5c9d8"></i><i style="left:468px;top:228px;width:12px;height:12px;background:#b4cbd9"></i><i style="left:480px;top:228px;width:12px;height:12px;background:#bed0d9"></i><i style="left:492px;top:228px;width:12px;height:12px;background:#cbd8e0"></i><i style="left:504px;top:228px;width:12px;height:12px;background:#efefef"></i><i style="left:516px;top:228px;width:12px;height:12px;background:#e8e6e8"></i><i style="left:528px;top:228px;width:12px;height:12px;background:#eef0f2"></i><i style="left:540px;top:228px;width:12px;height:12px;background:#f2f2f3"></i><i style="left:552px;top:228px;width:12px;height:12px;background:#ebebec"></i><i style="left:564px;top:228px;width:12px;height:12px;background:#ececed"></i><i style="left:576px;top:228px;width:12px;height:12px;background:#eeeeef"></i><i style="left:588px;top:228px;width:12px;height:12px;background:#f5f6f3"></i><i style="left:600px;top:228px;width:12px;height:12px;background:#ebe9eb"></i><i style="left:612px;top:228px;width:12px;height:12px;background:#f6f6f6"></i><i style="left:624px;top:228px;width:3px;height:12px;background:#e6e4e6"></i><i style="left:446px;top:240px;width:10px;height:12px;background:#b2cadb"></i><i style="left:456px;top:240px;width:12px;height:12px;background:#b0c9dc"></i><i style="left:468px;top:240px;width:12px;height:12px;background:#9dc1da"></i><i style="left:480px;top:240px;width:12px;height:12px;background:#afd0e2"></i><i style="left:492px;top:240px;width:12px;height:12px;background:#bfdae8"></i><i style="left:504px;top:240px;width:12px;height:12px;background:#f2f8fc"></i><i style="left:516px;top:240px;width:12px;height:12px;background:#fff"></i><i style="left:528px;top:240px;width:12px;height:12px;background:#fff"></i><i style="left:540px;top:240px;width:12px;height:12px;background:#fff"></i><i style="left:552px;top:240px;width:12px;height:12px;background:#fff"></i><i style="left:564px;top:240px;width:12px;height:12px;background:#fff"></i><i style="left:576px;top:240px;width:12px;height:12px;background:#fff"></i><i style="left:588px;top:240px;width:12px;height:12px;background:#fff"></i><i style="left:600px;top:240px;width:12px;height:12px;background:#fff"></i><i style="left:612px;top:240px;width:12px;height:12px;background:#fff"></i><i style="left:624px;top:240px;width:3px;height:12px;background:#fff"></i><i style="left:446px;top:252px;width:10px;height:12px;background:#d6dde3"></i><i style="left:456px;top:252px;width:12px;height:12px;background:#ced7e1"></i><i style="left:468px;top:252px;width:12px;height:12px;background:#d2dae4"></i><i style="left:480px;top:252px;width:12px;height:12px;background:#e0e7ea"></i><i style="left:492px;top:252px;width:12px;height:12px;background:#dbe1e4"></i><i style="left:504px;top:252px;width:12px;height:12px;background:#e3e2e3"></i><i style="left:516px;top:252px;width:12px;height:12px;background:#e1e0e2"></i><i style="left:528px;top:252px;width:12px;height:12px;background:#e4e3e5"></i><i style="left:540px;top:252px;width:12px;height:12px;background:#e3e1e3"></i><i style="left:552px;top:252px;width:12px;height:12px;background:#e8e6e8"></i><i style="left:564px;top:252px;width:12px;height:12px;background:#e6e5e7"></i><i style="left:576px;top:252px;width:12px;height:12px;background:#dedbdf"></i><i style="left:588px;top:252px;width:12px;height:12px;background:#e3e2e3"></i><i style="left:600px;top:252px;width:12px;height:12px;background:#e4e3e4"></i><i style="left:612px;top:252px;width:12px;height:12px;background:#dcdadf"></i><i style="left:624px;top:252px;width:3px;height:12px;background:#d6d3dc"></i><i style="left:446px;top:264px;width:10px;height:12px;background:#dbd9dc"></i><i style="left:456px;top:264px;width:12px;height:12px;background:#e0dfe1"></i><i style="left:468px;top:264px;width:12px;height:12px;background:#d9d8da"></i><i style="left:480px;top:264px;width:12px;height:12px;background:#e6e6e7"></i><i style="left:492px;top:264px;width:12px;height:12px;background:#e6e6e7"></i><i style="left:504px;top:264px;width:12px;height:12px;background:#e3e1e3"></i><i style="left:516px;top:264px;width:12px;height:12px;background:#e8e8ea"></i><i style="left:528px;top:264px;width:12px;height:12px;background:#dddbdd"></i><i style="left:540px;top:264px;width:12px;height:12px;background:#dcdadc"></i><i style="left:552px;top:264px;width:12px;height:12px;background:#e8e7e9"></i><i style="left:564px;top:264px;width:12px;height:12px;background:#eae9eb"></i><i style="left:576px;top:264px;width:12px;height:12px;background:#e6e4e6"></i><i style="left:588px;top:264px;width:12px;height:12px;background:#dfdde0"></i><i style="left:600px;top:264px;width:12px;height:12px;background:#dfdee0"></i><i style="left:612px;top:264px;width:12px;height:12px;background:#d8d5d9"></i><i style="left:624px;top:264px;width:3px;height:12px;background:#d0ccd6"></i><i style="left:446px;top:276px;width:10px;height:12px;background:#dbd9dc"></i><i style="left:456px;top:276px;width:12px;height:12px;background:#eeedeb"></i><i style="left:468px;top:276px;width:12px;height:12px;background:#d6d5d7"></i><i style="left:480px;top:276px;width:12px;height:12px;background:#d1ccd2"></i><i style="left:492px;top:276px;width:12px;height:12px;background:#ebebec"></i><i style="left:504px;top:276px;width:12px;height:12px;background:#dcd9dc"></i><i style="left:516px;top:276px;width:12px;height:12px;background:#d0cbd1"></i><i style="left:528px;top:276px;width:12px;height:12px;background:#e4e5e7"></i><i style="left:540px;top:276px;width:12px;height:12px;background:#d3d0d3"></i><i style="left:552px;top:276px;width:12px;height:12px;background:#d5d3d5"></i><i style="left:564px;top:276px;width:12px;height:12px;background:#e9ebe6"></i><i style="left:576px;top:276px;width:12px;height:12px;background:#cfc9d2"></i><i style="left:588px;top:276px;width:12px;height:12px;background:#d8d6d9"></i><i style="left:600px;top:276px;width:12px;height:12px;background:#d5d3d6"></i><i style="left:612px;top:276px;width:12px;height:12px;background:#d6d4d8"></i><i style="left:624px;top:276px;width:3px;height:12px;background:#d0ccd6"></i><i style="left:446px;top:288px;width:10px;height:6px;background:#e0dde0"></i><i style="left:456px;top:288px;width:12px;height:6px;background:#e3e1e5"></i><i style="left:468px;top:288px;width:12px;height:6px;background:#dddbde"></i><i style="left:480px;top:288px;width:12px;height:6px;background:#f3efee"></i><i style="left:492px;top:288px;width:12px;height:6px;background:#eceded"></i><i style="left:504px;top:288px;width:12px;height:6px;background:#e6e4e6"></i><i style="left:516px;top:288px;width:12px;height:6px;background:#e6e4e6"></i><i style="left:829px;top:228px;width:11px;height:12px;background:#e0dbdb"></i><i style="left:840px;top:228px;width:12px;height:12px;background:#cfccd3"></i><i style="left:852px;top:228px;width:12px;height:12px;background:#cfcdd2"></i><i style="left:864px;top:228px;width:12px;height:12px;background:#d4d3d6"></i><i style="left:876px;top:228px;width:12px;height:12px;background:#c9c6cf"></i><i style="left:888px;top:228px;width:12px;height:12px;background:#e6e4e0"></i><i style="left:900px;top:228px;width:12px;height:12px;background:#dcd8de"></i><i style="left:912px;top:228px;width:12px;height:12px;background:#cbc8ce"></i><i style="left:924px;top:228px;width:12px;height:12px;background:#dedad8"></i><i style="left:936px;top:228px;width:12px;height:12px;background:#cbc5cc"></i><i style="left:948px;top:228px;width:12px;height:12px;background:#d6d4da"></i><i style="left:960px;top:228px;width:4px;height:12px;background:#efece8"></i><i style="left:829px;top:240px;width:11px;height:12px;background:#fafcfb"></i><i style="left:840px;top:240px;width:12px;height:12px;background:#f3f3f4"></i><i style="left:852px;top:240px;width:12px;height:12px;background:#f9f9fa"></i><i style="left:864px;top:240px;width:12px;height:12px;background:#f7f7f8"></i><i style="left:876px;top:240px;width:12px;height:12px;background:#f9f9fa"></i><i style="left:888px;top:240px;width:12px;height:12px;background:#f9f9fa"></i><i style="left:900px;top:240px;width:12px;height:12px;background:#f8f8f9"></i><i style="left:912px;top:240px;width:12px;height:12px;background:#fbfcfb"></i><i style="left:924px;top:240px;width:12px;height:12px;background:#f4f3f4"></i><i style="left:936px;top:240px;width:12px;height:12px;background:#f9f9fa"></i><i style="left:948px;top:240px;width:12px;height:12px;background:#f7f7f7"></i><i style="left:960px;top:240px;width:4px;height:12px;background:#f4f4f7"></i><i style="left:829px;top:252px;width:11px;height:12px;background:#fff"></i><i style="left:840px;top:252px;width:12px;height:12px;background:#fff"></i><i style="left:852px;top:252px;width:12px;height:12px;background:#fff"></i><i style="left:864px;top:252px;width:12px;height:12px;background:#fff"></i><i style="left:876px;top:252px;width:12px;height:12px;background:#fff"></i><i style="left:888px;top:252px;width:12px;height:12px;background:#fff"></i><i style="left:900px;top:252px;width:12px;height:12px;background:#fff"></i><i style="left:912px;top:252px;width:12px;height:12px;background:#fff"></i><i style="left:924px;top:252px;width:12px;height:12px;background:#fff"></i><i style="left:936px;top:252px;width:12px;height:12px;background:#fff"></i><i style="left:948px;top:252px;width:12px;height:12px;background:#fff"></i><i style="left:960px;top:252px;width:4px;height:12px;background:#fff"></i><i style="left:829px;top:264px;width:11px;height:12px;background:#d6d5da"></i><i style="left:840px;top:264px;width:12px;height:12px;background:#d2d1d7"></i><i style="left:852px;top:264px;width:12px;height:12px;background:#d8d8db"></i><i style="left:864px;top:264px;width:12px;height:12px;background:#e6e6e4"></i><i style="left:876px;top:264px;width:12px;height:12px;background:#cfccd4"></i><i style="left:888px;top:264px;width:12px;height:12px;background:#d2d1d5"></i><i style="left:900px;top:264px;width:12px;height:12px;background:#d2d1d6"></i><i style="left:912px;top:264px;width:12px;height:12px;background:#cfccd4"></i><i style="left:924px;top:264px;width:12px;height:12px;background:#d6d4d7"></i><i style="left:936px;top:264px;width:12px;height:12px;background:#cfc8cc"></i><i style="left:948px;top:264px;width:12px;height:12px;background:#d9dbd9"></i><i style="left:960px;top:264px;width:4px;height:12px;background:#c9ccd6"></i><i style="left:829px;top:276px;width:11px;height:12px;background:#d9d8dd"></i><i style="left:840px;top:276px;width:12px;height:12px;background:#d4d5da"></i><i style="left:852px;top:276px;width:12px;height:12px;background:#efebec"></i><i style="left:864px;top:276px;width:12px;height:12px;background:#e3e5e5"></i><i style="left:876px;top:276px;width:12px;height:12px;background:#e2e3e6"></i><i style="left:888px;top:276px;width:12px;height:12px;background:#f8f8f8"></i><i style="left:900px;top:276px;width:12px;height:12px;background:#fafafa"></i><i style="left:912px;top:276px;width:12px;height:12px;background:#f3f2f4"></i><i style="left:924px;top:276px;width:12px;height:12px;background:#fbfbfb"></i><i style="left:936px;top:276px;width:12px;height:12px;background:#f9f9f9"></i><i style="left:948px;top:276px;width:12px;height:12px;background:#f6f5f6"></i><i style="left:960px;top:276px;width:4px;height:12px;background:#f4f4f7"></i><i style="left:829px;top:288px;width:11px;height:3px;background:#d8d4da"></i><i style="left:840px;top:288px;width:12px;height:3px;background:#bfc4cc"></i><i style="left:852px;top:288px;width:12px;height:3px;background:#dcd6dc"></i><i style="left:864px;top:288px;width:12px;height:3px;background:#e6e0e0"></i><i style="left:876px;top:288px;width:12px;height:3px;background:#c6cbd2"></i><div class="pnl" style="top:311px;height:77px"><div class="ph"><span>Notify</span></div></div><div class="tb" style="left:337px;top:338px;width:812px;height:47px"></div><div class="lb" style="left:338px;top:339px;width:76px;height:47px"></div><div class="vl" style="left:414px;top:338px;height:49px"></div><div class="hl2" style="left:337px;top:362px;width:814px"></div><span class="lbl" style="left:315.5px;top:343px">Name</span><span class="lbl" style="left:315.5px;top:367px">Address</span><span class="val" style="left:418px;top:346px;">CHE</span><span class="val" style="right:599px;top:346px;">MALA INC</span><span style="left:595px;top:340px;width:18px;height:18px"><svg class="globe" width="18" height="18" viewBox="0 0 18 18"><defs><radialGradient id="gg" cx="50%" cy="50%" r="50%"><stop offset="0" stop-color="#1672c4"/><stop offset="0.75" stop-color="#1a74c6"/><stop offset="0.93" stop-color="#4a98dc"/><stop offset="1" stop-color="#8fc3ee" stop-opacity=".7"/></radialGradient><filter id="gb" x="-20%" y="-20%" width="140%" height="140%"><feGaussianBlur stdDeviation="0.7"/></filter><clipPath id="gc"><circle cx="9" cy="9" r="8.8"/></clipPath></defs><circle cx="9" cy="9" r="9" fill="url(#gg)"/><g clip-path="url(#gc)" filter="url(#gb)"><ellipse cx="5.8" cy="3.2" rx="2.4" ry="1.1" fill="#fff" opacity=".8" transform="rotate(-18 5.8 3.2)"/><ellipse cx="12" cy="2.8" rx="2.6" ry="1" fill="#9fcdf0" opacity=".6"/><ellipse cx="9.5" cy="9.4" rx="6.5" ry="1.3" fill="#b8d8f4" opacity=".7" transform="rotate(-16 9.5 9.4)"/><ellipse cx="8.2" cy="12.2" rx="1.8" ry="1.5" fill="#a8c8f0" opacity=".6"/><ellipse cx="12.5" cy="11.8" rx="2.4" ry="1.2" fill="#a8c8f0" opacity=".55"/><ellipse cx="11.2" cy="15.4" rx="3.4" ry="1.3" fill="#e8f3fc" opacity=".75" transform="rotate(-12 11.2 15.4)"/><ellipse cx="5.4" cy="6.6" rx="1.6" ry="1.2" fill="#0a5fb4" opacity=".7"/><ellipse cx="9" cy="5.8" rx="1.7" ry="1.3" fill="#0a5fb4" opacity=".7"/><ellipse cx="3.8" cy="12" rx="2" ry="2.6" fill="#0a60b6" opacity=".6"/><ellipse cx="14.2" cy="8" rx="2" ry="2.2" fill="#0a60b6" opacity=".55"/></g></svg></span><span class="radar" style="left:623px;top:340px"><svg width="81" height="18" viewBox="0 0 81 18" style="position:absolute;left:0;top:0"><rect x="0.8" y="0.8" width="79.4" height="16.4" rx="8.2" fill="#fff" stroke="#1f77a6" stroke-width="1.6"/><g transform="translate(6.2,1.9) scale(0.9)"><path d="M1.6 2.2 L12.4 11.2 C10 14.2 5 13.8 2.6 10.6 C0.8 8.2 0.6 4.6 1.6 2.2 Z" fill="#1876a4"/><path d="M3.6 11.4 L2 15.4 L10.6 15.4 L9 12.4 Z" fill="#1876a4"/><path d="M6 7.8 L10.6 3.6" stroke="#1876a4" stroke-width="1.8"/><circle cx="11.2" cy="3.1" r="1.6" fill="#4f97be"/><path d="M10 0.5 C13.2 0.1 15.1 2.3 14.5 5.3" fill="none" stroke="#9cc6dc" stroke-width="1.2"/></g></svg><span class="rt">商情雷达</span></span><span class="val" style="left:418px;top:367px;">DIA</span><span class="val" style="right:112px;top:367px;letter-spacing:-.04px">CIO INTERAMERICAS4 NIVEL TORRE SUR 10-50 ZONA 10GUATEMALA GUATEMALA GUA</span><i style="left:439px;top:348px;width:5px;height:12px;background:#c8c8ce"></i><i style="left:444px;top:348px;width:12px;height:12px;background:#d3cfd2"></i><i style="left:456px;top:348px;width:12px;height:12px;background:#cbcdcd"></i><i style="left:468px;top:348px;width:12px;height:12px;background:#d3cfd0"></i><i style="left:480px;top:348px;width:12px;height:12px;background:#dbdadf"></i><i style="left:492px;top:348px;width:12px;height:12px;background:#cfc9d0"></i><i style="left:504px;top:348px;width:12px;height:12px;background:#d3d4d3"></i><i style="left:516px;top:348px;width:12px;height:12px;background:#c8c4cc"></i><i style="left:528px;top:348px;width:3px;height:12px;background:#d6c8cc"></i><i style="left:439px;top:360px;width:5px;height:12px;background:#efeeed"></i><i style="left:444px;top:360px;width:12px;height:12px;background:#f0eff0"></i><i style="left:456px;top:360px;width:12px;height:12px;background:#f0f0f1"></i><i style="left:468px;top:360px;width:12px;height:12px;background:#f1f0f1"></i><i style="left:480px;top:360px;width:12px;height:12px;background:#f6f6f4"></i><i style="left:492px;top:360px;width:12px;height:12px;background:#f1f0f2"></i><i style="left:504px;top:360px;width:12px;height:12px;background:#f0f0f0"></i><i style="left:516px;top:360px;width:12px;height:12px;background:#efeeef"></i><i style="left:528px;top:360px;width:3px;height:12px;background:#f0eef0"></i><i style="left:439px;top:372px;width:5px;height:7px;background:#cccbcc"></i><i style="left:444px;top:372px;width:12px;height:7px;background:#c9c8cb"></i><i style="left:456px;top:372px;width:12px;height:7px;background:#bdb7c0"></i><i style="left:468px;top:372px;width:12px;height:7px;background:#b9b7ba"></i><i style="left:480px;top:372px;width:12px;height:7px;background:#dedddc"></i><i style="left:492px;top:372px;width:12px;height:7px;background:#c9c7cb"></i><i style="left:504px;top:372px;width:12px;height:7px;background:#c6c1c8"></i><i style="left:516px;top:372px;width:12px;height:7px;background:#cbc8d0"></i><i style="left:528px;top:372px;width:3px;height:7px;background:#b5adba"></i><div class="pnl" style="top:392px;height:99px"><div class="ph"><span>Product Info</span></div></div><div class="tb" style="left:337px;top:419px;width:812px;height:69px"></div><div class="lb" style="left:338px;top:420px;width:76px;height:69px"></div><div class="lb" style="left:744px;top:420px;width:76px;height:69px"></div><div class="vl" style="left:414px;top:419px;height:71px"></div><div class="vl" style="left:743px;top:419px;height:71px"></div><div class="vl" style="left:820px;top:419px;height:71px"></div><div class="hl2" style="left:337px;top:454px;width:814px"></div><span class="lbl" style="left:315.5px;top:422px">B/L Teus
Quantity</span><span class="lbl" style="left:315.5px;top:457px">Container
LCL/FCL</span><span class="lbl" style="left:722px;top:430px">Teus</span><span class="val" style="left:418px;top:430px;">1</span><span class="val" style="left:418px;top:465px;">FCL</span><span class="val" style="left:824px;top:430px;">1</span><div class="pnl" style="top:495px;height:239px"><div class="ph"><span>Shipping Info</span></div></div><div class="tb" style="left:337px;top:522px;width:812px;height:209px"></div><div class="lb" style="left:338px;top:523px;width:76px;height:209px"></div><div class="lb" style="left:741px;top:523px;width:76px;height:209px"></div><div class="vl" style="left:414px;top:522px;height:211px"></div><div class="vl" style="left:740px;top:522px;height:211px"></div><div class="vl" style="left:817px;top:522px;height:211px"></div><div class="hl2" style="left:337px;top:557px;width:814px"></div><div class="hl2" style="left:337px;top:592px;width:814px"></div><div class="hl2" style="left:337px;top:627px;width:814px"></div><div class="hl2" style="left:337px;top:662px;width:814px"></div><div class="hl2" style="left:337px;top:697px;width:814px"></div><span class="lbl" style="left:315.5px;top:533px">Carrier</span><span class="val" style="left:418px;top:533px;">SEABOARD</span><span class="lbl" style="left:718.5px;top:525px">Country of
Origin</span><span class="val" style="left:821px;top:533px;">ESTADOS UNIDOS DE AMERICA</span><span class="lbl" style="left:315.5px;top:568px">Vessel</span><span class="val" style="left:418px;top:568px;">SEABOARD CARIBE</span><span class="lbl" style="left:718.5px;top:560px">Port of
Arrival</span><span class="val" style="left:821px;top:568px;">PUERTO SANTO TOMáS DE CASTILLA, GUATEMALA</span><span class="lbl" style="left:315.5px;top:603px">Voyage</span><span class="val" style="left:418px;top:603px;">158</span><span class="lbl" style="left:718.5px;top:595px">Port of
Departure</span><span class="val" style="left:821px;top:603px;">NEW ORLEANS, UNITED STATES</span><span class="lbl" style="left:315.5px;top:630px">Bill Of
Lading No.</span><span class="val" style="left:418px;top:638px;">SMLU3284511A</span><span class="lbl" style="left:718.5px;top:630px">Country of
Destination</span><span class="val" style="left:821px;top:638px;">GUATEMALA</span><span class="lbl" style="left:315.5px;top:665px">Vessel
Country</span><span class="val" style="left:418px;top:673px;">ANTIGUA AND BARBUDA</span><span class="lbl" style="left:718.5px;top:673px">IMO Code</span><span class="val" style="left:821px;top:673px;">9389435</span><span class="lbl" style="left:315.5px;top:700px">Container
No.</span><span class="val" style="left:418px;top:708px;">TQMU1645030</span><span class="lbl" style="left:718.5px;top:708px">Date</span><span class="val" style="left:821px;top:708px;">2013-01-27</span><div class="pnl" style="top:738px;height:64px"><div class="ph"><span>Description</span></div></div><div class="tb" style="left:337px;top:765px;width:812px;height:34px"></div><div class="lb" style="left:338px;top:766px;width:76px;height:34px"></div><div class="vl" style="left:414px;top:765px;height:36px"></div><span class="lbl" style="left:315.5px;top:768px">Product
Description</span><span class="val" style="left:418px;top:768px;letter-spacing:-.065px">ISO TANK STCOGA 72043 HS 38119000UN1993 FLAMMABLE LIQUID N.O.S.PETROLEUM LIGHT AROMATICSOLVENT</span><span class="val" style="left:418px;top:784px;letter-spacing:-.05px">NAPHTHA 3 III MARINE POLLUTANT 50 DEG C POLYETHER AMINE PETROL</span>
</div>
</body></html>
